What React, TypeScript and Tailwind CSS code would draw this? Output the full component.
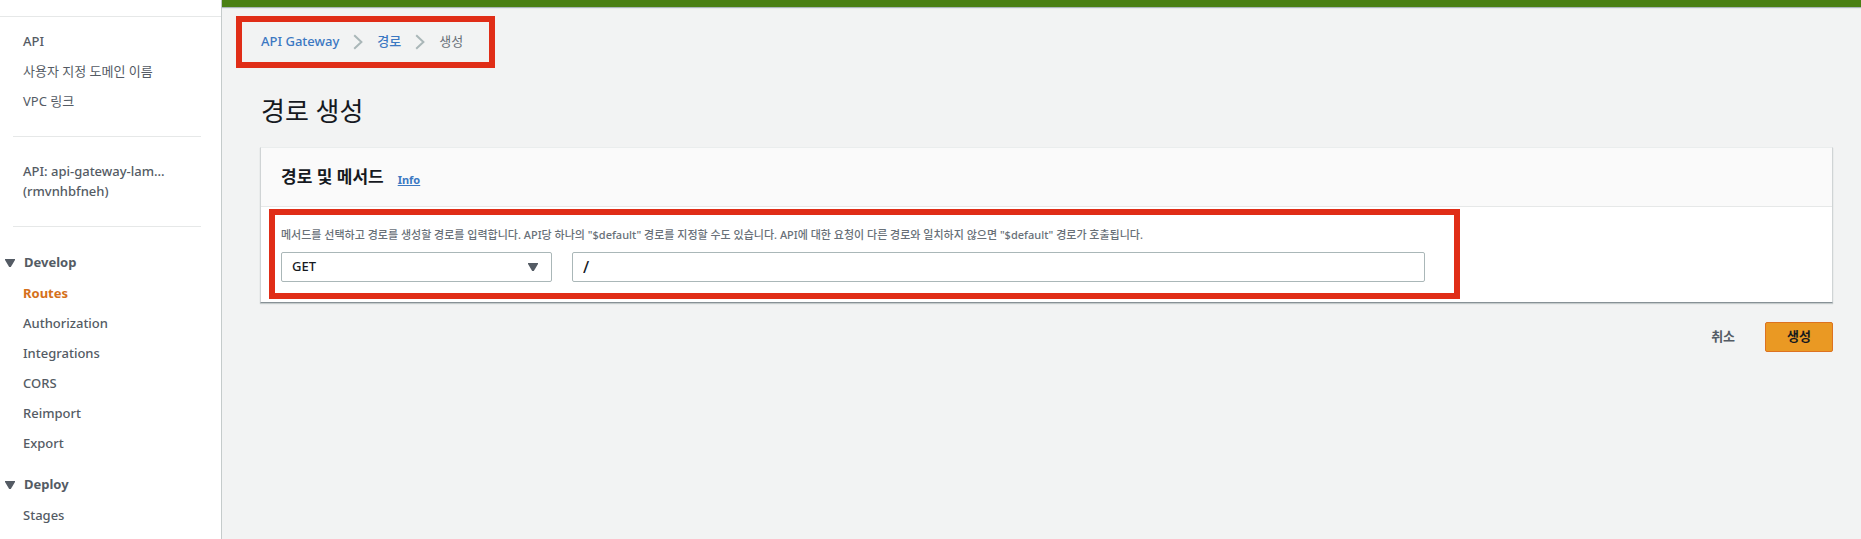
import { ReactNode } from "react";

function Triangle({ className = "" }: { className?: string }) {
  return (
    <svg className={className} width="10" height="8" viewBox="0 0 10 8" aria-hidden="true">
      <path d="M0 0H10V1L5.8 8H4.2L0 1Z" fill="#545b64" />
    </svg>
  );
}

function Chevron() {
  return (
    <svg width="10" height="16" viewBox="0 0 10 16" fill="none" aria-hidden="true">
      <path d="M1.2 1.2L8.4 8L1.2 14.8" stroke="#aab7b8" strokeWidth="2" />
    </svg>
  );
}

function NavItem({ children, active = false, korean = false }: { children: ReactNode; active?: boolean; korean?: boolean }) {
  return (
    <li className="h-[30px] leading-[28px]">
      <a
        href="#"
        aria-current={active ? "page" : undefined}
        className={`${active ? "font-bold text-[#d5701b]" : ""} ${korean ? "font-normal" : ""}`}
      >
        {children}
      </a>
    </li>
  );
}

function NavSection({ title, items }: { title: string; items: string[] }) {
  return (
    <section>
      <button type="button" className="flex h-8 items-center gap-2 pl-[5px] font-bold">
        <Triangle />
        <span className="pl-px">{title}</span>
      </button>
      <ul className="pl-[23px]">
        {items.map((item) => (
          <NavItem key={item} active={item === "Routes"}>
            {item}
          </NavItem>
        ))}
      </ul>
    </section>
  );
}

export default function App() {
  return (
    <div className="flex h-screen overflow-hidden bg-[#f2f3f3] font-['Noto_Sans','Noto_Sans_CJK_KR',sans-serif] text-[13px] font-medium text-[#545b64]">
      <nav className="w-[222px] shrink-0 overflow-hidden border-r border-[#c5cbcb] bg-white pt-4">
        <div className="border-t border-[#e6e8e8] pt-[10px]">
          <ul className="pl-[23px]">
            <NavItem>API</NavItem>
            <NavItem korean>사용자 지정 도메인 이름</NavItem>
            <NavItem korean>VPC 링크</NavItem>
          </ul>
          <hr className="mr-5 mt-[19px] ml-[13px] border-[#e6e8e8]" />
          <p className="mt-6 pl-[23px] leading-5">
            API: api-gateway-lam...
            <br />
            (rmvnhbfneh)
          </p>
          <hr className="mr-5 mt-[25px] mb-5 ml-[13px] border-[#e6e8e8]" />
          <div className="flex flex-col gap-[10px]">
            <NavSection
              title="Develop"
              items={["Routes", "Authorization", "Integrations", "CORS", "Reimport", "Export"]}
            />
            <NavSection title="Deploy" items={["Stages"]} />
          </div>
        </div>
      </nav>

      <div className="min-w-0 flex-1">
        <div className="h-[7px] bg-[#4a8014] shadow-[0_1px_1px_#aab7b8]" />
        <main className="pr-7 pl-[39px]">
          <div className="flex pt-[9px]">
            <nav
              aria-label="Breadcrumb"
              className="-ml-[25px] flex h-[52px] w-[259px] items-center gap-[14px] border-6 border-[#e02d17] pl-[19px]"
            >
              <a href="#" className="text-[#3b78c2]">API Gateway</a>
              <Chevron />
              <a href="#" className="text-[#3b78c2]">경로</a>
              <Chevron />
              <span className="font-normal text-[#687078]">생성</span>
            </nav>
          </div>

          <h1 className="mt-[25px] text-[26px] leading-9 font-normal text-[#16191f]">경로 생성</h1>

          <section className="relative mt-[18px] -ml-px border-x border-t border-b border-x-[#d0d4d5] border-t-[#eaeded] border-b-[#879196] bg-white shadow-[0_1px_1px_#c5cbcb]">
            <header className="flex h-[59px] items-center gap-[14px] border-b border-[#e6e8e8] bg-[#fafafa] px-5">
              <h2 className="text-[17px] font-bold text-[#16191f]">경로 및 메서드</h2>
              <a href="#" className="pt-[6px] text-[11px] font-bold text-[#3b78c2] underline">Info</a>
            </header>
            <form className="w-3/4 pt-[18px] pr-[14px] pb-5 pl-5">
              <p className="text-[11px] leading-5 text-[#687078]">
                메서드를 선택하고 경로를 생성할 경로를 입력합니다. API당 하나의 "$default" 경로를 지정할 수도 있습니다. API에 대한 요청이 다른 경로와 일치하지 않으면 "$default" 경로가 호출됩니다.
              </p>
              <div className="mt-[7px] grid grid-cols-4 gap-5">
                <div className="relative">
                  <select
                    aria-label="메서드"
                    className="h-[30px] w-full appearance-none rounded-[2px] border border-[#aab7b8] bg-white pl-[10px] text-[#16191f]"
                    defaultValue="GET"
                  >
                    <option>GET</option>
                  </select>
                  <Triangle className="pointer-events-none absolute top-[11px] right-[14px]" />
                </div>
                <input
                  aria-label="경로"
                  defaultValue="/"
                  className="col-span-3 h-[30px] min-w-0 rounded-[2px] border border-[#aab7b8] bg-white px-[10px] text-base text-[#16191f]"
                />
              </div>
            </form>
            <div className="pointer-events-none absolute top-[61px] bottom-[3px] left-[8px] w-[1191px] border-6 border-[#e02d17]" />
          </section>

          <div className="mt-[19px] flex justify-end gap-[10px] font-bold">
            <button type="button" className="h-[30px] px-5">취소</button>
            <button
              type="submit"
              className="h-[30px] rounded-[2px] border border-[#dd7220] bg-[#ea9923] px-[21px] text-[#16191f]"
            >
              생성
            </button>
          </div>
        </main>
      </div>
    </div>
  );
}
